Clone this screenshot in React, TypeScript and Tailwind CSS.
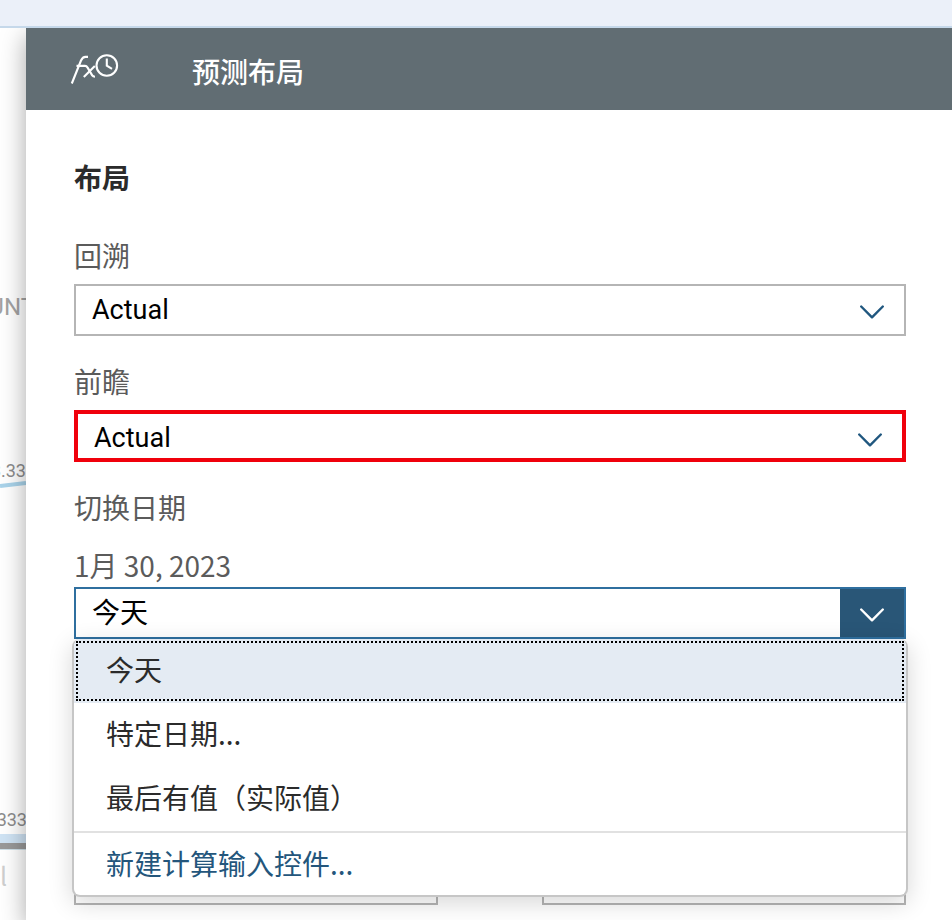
import React, { useState } from "react";

interface SelectFieldProps {
  id: string;
  label: string;
  options: string[];
  invalid?: boolean;
}

const ACTION_ITEM = "新建计算输入控件...";
const DATE_OPTIONS = ["今天", "特定日期...", "最后有值（实际值）"];

function Chevron() {
  return (
    <svg width="24" height="14" viewBox="0 0 24 14" fill="none">
      <path
        d="M1.2 1.5 L12 12.3 L22.8 1.5"
        stroke="currentColor"
        strokeWidth="2.4"
        strokeLinecap="round"
        strokeLinejoin="round"
      />
    </svg>
  );
}

function ForecastIcon() {
  return (
    <svg
      width="50"
      height="32"
      viewBox="0 0 50 32"
      fill="none"
      stroke="currentColor"
      strokeWidth="2.1"
    >
      <path d="M1.8 30.5 L11 7.5 Q12.6 3.9 15.5 3.9 H18" />
      <path d="M6.5 12.9 H15 Q16.6 12.9 17.6 14.6 L22.2 22.4 Q23 23.7 25 23.7" />
      <path d="M24.8 13 L13.8 24" />
      <circle cx="36.8" cy="12.5" r="10.3" />
      <path d="M36.8 5.5 V12.6 L42 15.8" />
    </svg>
  );
}

// sliver of the chart that stays visible beside the panel
function ChartEdge() {
  return (
    <svg
      className="block shrink-0"
      width="26"
      height="892"
      fontFamily='Roboto, "Liberation Sans", sans-serif'
    >
      <text x="35" y="287" textAnchor="end" fontSize="24" fill="#a3a3a3">
        ACCOUNT
      </text>
      <text x="26" y="449" textAnchor="end" fontSize="18" fill="#8c8c8c">
        3.33
      </text>
      <path d="M0 458 L26 455" stroke="#a9d3ea" strokeWidth="4" />
      <text x="27" y="798" textAnchor="end" fontSize="18" fill="#8c8c8c">
        333
      </text>
      <rect y="806" width="26" height="9" fill="#cfe3f4" />
      <rect y="815" width="26" height="6" fill="#999" />
      <rect y="821" width="26" height="1" fill="#cfe0e8" />
      <text
        x="0"
        y="858"
        fontSize="25"
        fill="#cfcfcf"
        fontFamily='"Noto Sans CJK SC", sans-serif'
      >
        l
      </text>
    </svg>
  );
}

function SelectField({ id, label, options, invalid }: SelectFieldProps) {
  return (
    <div className="mt-[26px] flex flex-col gap-2">
      <label htmlFor={id} className="pb-0.5 leading-[38px]">
        {label}
      </label>
      <div className="grid items-center text-[#20577f]">
        <select
          id={id}
          className={`col-start-1 row-start-1 h-[52px] w-full appearance-none bg-white px-4 font-[Roboto,'Noto_Sans_CJK_SC',sans-serif] text-[27px] text-black outline-none ${
            invalid
              ? "border-4 border-[#f0000c] pt-1"
              : "border-2 border-[#b5b5b5]"
          }`}
        >
          {options.map((option) => (
            <option key={option}>{option}</option>
          ))}
        </select>
        <span
          className={`pointer-events-none col-start-1 row-start-1 justify-self-end ${
            invalid ? "pt-2 pr-6" : "pt-1 pr-[22px]"
          }`}
        >
          <Chevron />
        </span>
      </div>
    </div>
  );
}

function DateField() {
  const [open, setOpen] = useState(true);
  const [selected, setSelected] = useState(DATE_OPTIONS[0]);

  const handleOptionClick = (option: string) => {
    setSelected(option);
    setOpen(false);
  };

  return (
    <div className="mt-[26px]">
      <div className="pb-0.5 leading-[38px]">切换日期</div>
      <label
        htmlFor="switch-date"
        className="mt-[18px] mb-px block pb-0.5 leading-[38px]"
      >
        1月 30, 2023
      </label>
      <div className="relative">
        <div className="flex h-[52px] border-2 border-[#2f6f9f] bg-white">
          <input
            id="switch-date"
            className="min-w-0 flex-1 px-4 pb-1 text-black outline-none"
            value={selected}
            readOnly
          />
          <button
            type="button"
            aria-expanded={open}
            aria-controls="switch-date-menu"
            aria-label="切换日期"
            className="flex w-16 items-center justify-center bg-[#295677] pt-1 text-white"
            onClick={() => setOpen(!open)}
          >
            <Chevron />
          </button>
        </div>

        {open && (
          <div
            id="switch-date-menu"
            className="absolute top-full -right-0.5 -left-0.5 z-10 overflow-hidden rounded-lg border-2 border-t-0 border-[#c6c6c6] bg-white text-[#2b2b2b] shadow-[0_6px_24px_rgba(0,0,0,0.16)]"
          >
            {DATE_OPTIONS.map((option) => (
              <button
                key={option}
                type="button"
                className={`block h-16 w-full text-left ${
                  option === selected ? "bg-[#e4ebf3] p-0.5" : "px-8 pb-1"
                }`}
                onClick={() => handleOptionClick(option)}
              >
                {option === selected ? (
                  <span className="flex h-full items-center border-2 border-dotted border-black px-7 pb-1">
                    {option}
                  </span>
                ) : (
                  option
                )}
              </button>
            ))}
            <button
              type="button"
              className="block h-16 w-full border-t-2 border-[#e1e1e1] px-8 pb-0.5 text-left text-[#24567c]"
            >
              {ACTION_ITEM}
            </button>
          </div>
        )}
      </div>
    </div>
  );
}

function App() {
  return (
    <div className="flex h-screen flex-col overflow-hidden bg-white font-['Noto_Sans_CJK_SC',sans-serif] text-[28px] text-[#5b5b5b]">
      <div className="relative z-20 h-7 shrink-0 border-b-2 border-[#c5d8ea] bg-[#ebf0f9]" />

      <div className="flex min-h-0 flex-1">
        <ChartEdge />

        <main className="relative min-w-0 flex-1 bg-white shadow-[0_8px_24px_rgba(0,0,0,0.35)]">
          <header className="flex h-[82px] items-center gap-[72px] bg-[#616d73] pl-11 text-white">
            <ForecastIcon />
            <h1 className="pt-1 font-medium">预测布局</h1>
          </header>

          <div className="pt-12 pr-[46px] pl-12">
            <h2 className="mb-[38px] pb-0.5 leading-[38px] font-bold text-[#2b2b2b]">
              布局
            </h2>
            <SelectField
              id="look-back"
              label="回溯"
              options={["Actual", "Forecast"]}
            />
            <SelectField
              id="look-ahead"
              label="前瞻"
              options={["Actual", "Forecast"]}
              invalid
            />
            <DateField />

            <div className="mt-[214px] grid grid-cols-2 gap-[104px]">
              <input
                aria-label="开始"
                className="h-[52px] min-w-0 border-2 border-[#b5b5b5] px-4"
              />
              <input
                aria-label="结束"
                className="h-[52px] min-w-0 border-2 border-[#b5b5b5] px-4"
              />
            </div>
          </div>
        </main>
      </div>
    </div>
  );
}

export default App;
